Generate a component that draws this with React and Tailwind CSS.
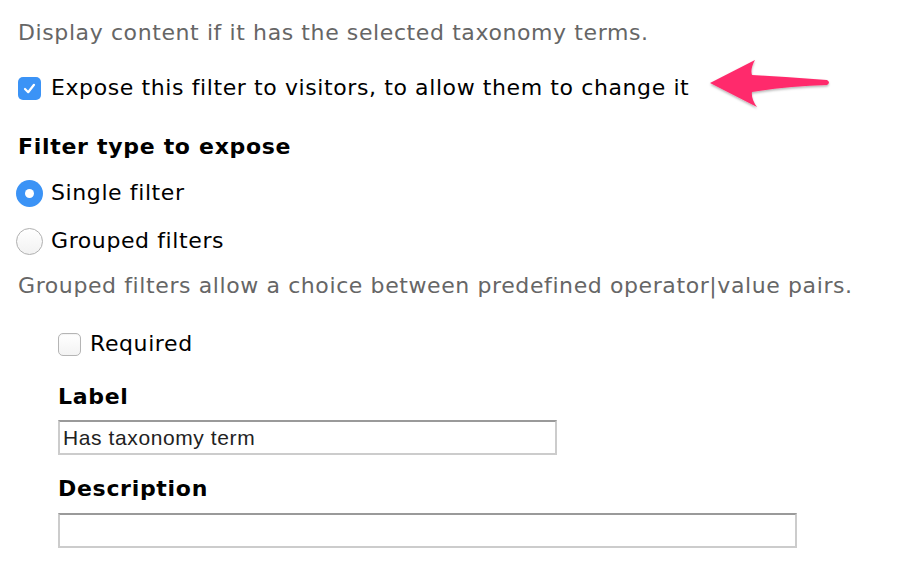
import React from "react";

function CheckedBox() {
  return (
    <span className="flex h-[23px] w-[23px] shrink-0 items-center justify-center rounded-[5px] bg-[#3b93f6]">
      <svg width="15" height="15" viewBox="0 0 15 15">
        <path d="M3 8 L6.2 11.2 L12 3.8" fill="none" stroke="white" strokeWidth="2.2" strokeLinecap="round" strokeLinejoin="round" />
      </svg>
    </span>
  );
}

function EmptyBox() {
  return (
    <span className="block h-[23px] w-[23px] shrink-0 rounded-[5px] border border-[#b5b5b5] bg-gradient-to-b from-white to-[#f3f3f3] shadow-[inset_0_1px_1px_rgba(0,0,0,0.05)]" />
  );
}

function RadioOn() {
  return (
    <span className="flex h-[27px] w-[27px] shrink-0 items-center justify-center rounded-full bg-[#3b93f6]">
      <span className="block h-[9px] w-[9px] rounded-full bg-white" />
    </span>
  );
}

function RadioOff() {
  return (
    <span className="block h-[27px] w-[27px] shrink-0 rounded-full border border-[#b0b0b0] bg-gradient-to-b from-white to-[#f2f2f2]" />
  );
}

function Arrow() {
  return (
    <svg className="absolute left-[700px] top-[55px]" width="140" height="60" viewBox="0 0 140 60">
      <defs>
        <filter id="sh" x="-10%" y="-10%" width="130%" height="140%">
          <feDropShadow dx="0" dy="1.5" stdDeviation="1.2" floodColor="#000" floodOpacity="0.3" />
        </filter>
      </defs>
      <path
        d="M10 28 L55 5 Q50 14 52 20 Q90 22 127 25 Q131 27.5 127 30 Q90 31 52 37 Q51 44 57 52 Z"
        fill="#ff2c6c"
        filter="url(#sh)"
      />
    </svg>
  );
}

export default function App() {
  return (
    <div className="relative min-h-[562px] w-[924px] bg-white pl-[18px] pt-[17px] text-[22px] leading-[32px] tracking-[0.6px] text-black [font-family:'DejaVu_Sans',sans-serif]">
      <p className="text-[#666666]">Display content if it has the selected taxonomy terms.</p>

      <div className="mt-[23px] flex items-center gap-[10px]">
        <CheckedBox />
        <span>Expose this filter to visitors, to allow them to change it</span>
      </div>

      <h3 className="mt-[27px] font-bold tracking-[0.7px]">Filter type to expose</h3>

      <div className="mt-[14px] -ml-[2px] flex items-center gap-[8px]">
        <RadioOn />
        <span>Single filter</span>
      </div>
      <div className="mt-[16px] -ml-[2px] flex items-center gap-[8px]">
        <RadioOff />
        <span>Grouped filters</span>
      </div>

      <p className="mt-[13px] text-[#666666]">Grouped filters allow a choice between predefined operator|value pairs.</p>

      <div className="pl-[40px]">
        <div className="mt-[26px] flex items-center gap-[9px]">
          <EmptyBox />
          <span>Required</span>
        </div>

        <div className="mt-[21px] font-bold tracking-[0.7px]">Label</div>
        <div className="mt-[7px] flex h-[35px] w-[499px] items-center border-2 border-[#cccccc] border-t-[#9a9a9a] pl-[3px] text-[21px] tracking-[0.6px] text-[#222] [font-family:'Liberation_Sans',Arial,sans-serif]">
          Has taxonomy term
        </div>

        <div className="mt-[18px] font-bold tracking-[0.7px]">Description</div>
        <div className="mt-[8px] h-[35px] w-[739px] border-2 border-[#cccccc] border-t-[#9a9a9a]" />
      </div>

      <Arrow />
    </div>
  );
}
